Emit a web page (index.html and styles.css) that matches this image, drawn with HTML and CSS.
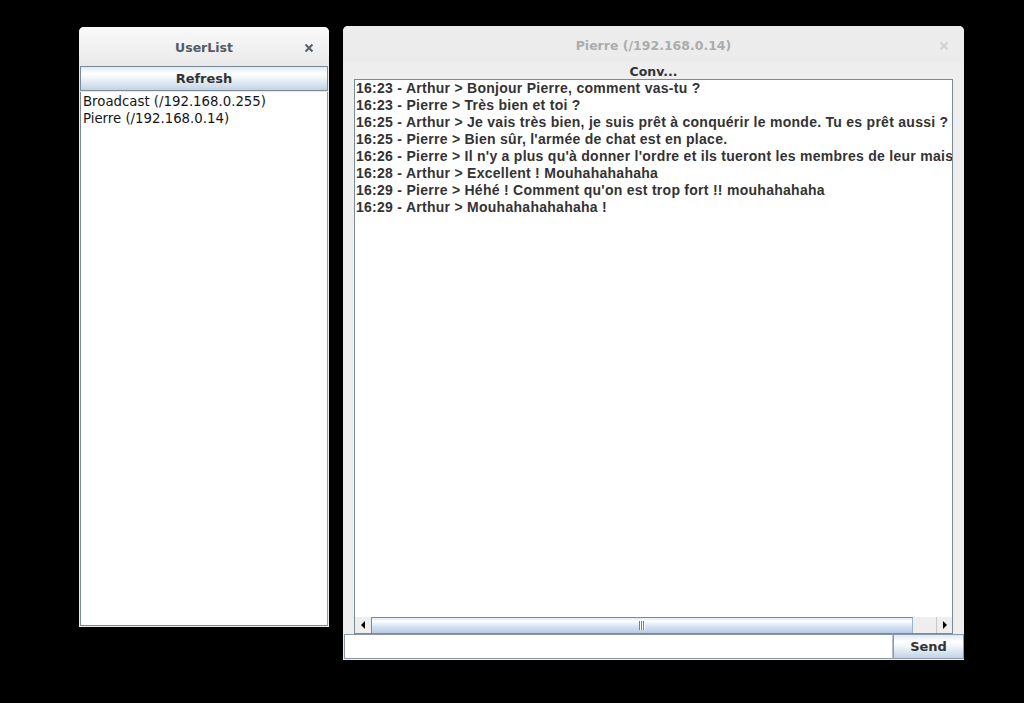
FILE: index.html
```html
<!DOCTYPE html>
<html>
<head>
<meta charset="utf-8">
<title>Chat</title>
<link rel="stylesheet" href="styles.css">
</head>
<body>
<div class="desktop">
  <div class="window win-users">
    <div class="titlebar active">
      <span class="title">UserList</span>
      <svg class="close" width="10" height="10" viewBox="0 0 10 10"><path d="M1.5 1.5 L8.5 8.5 M8.5 1.5 L1.5 8.5" stroke="currentColor" stroke-width="2" fill="none"/></svg>
    </div>
    <div class="users-body">
      <div class="btn btn-refresh">Refresh</div>
      <ul class="userlist">
        <li>Broadcast (/192.168.0.255)</li>
        <li>Pierre (/192.168.0.14)</li>
      </ul>
    </div>
  </div>

  <div class="window win-conv">
    <div class="titlebar inactive">
      <span class="title">Pierre (/192.168.0.14)</span>
      <svg class="close" width="10" height="10" viewBox="0 0 10 10"><path d="M1.5 1.5 L8.5 8.5 M8.5 1.5 L1.5 8.5" stroke="currentColor" stroke-width="2" fill="none"/></svg>
    </div>
    <div class="conv-label">Conv...</div>
    <div class="scrollpane">
      <div class="messages">
        <div class="msg">16:23 - Arthur &gt; Bonjour Pierre, comment vas-tu ?</div>
        <div class="msg">16:23 - Pierre &gt; Très bien et toi ?</div>
        <div class="msg">16:25 - Arthur &gt; Je vais très bien, je suis prêt à conquérir le monde. Tu es prêt aussi ?</div>
        <div class="msg">16:25 - Pierre &gt; Bien sûr, l'armée de chat est en place.</div>
        <div class="msg">16:26 - Pierre &gt; Il n'y a plus qu'à donner l'ordre et ils tueront les membres de leur maison</div>
        <div class="msg">16:28 - Arthur &gt; Excellent ! Mouhahahahaha</div>
        <div class="msg">16:29 - Pierre &gt; Héhé ! Comment qu'on est trop fort !! mouhahahaha</div>
        <div class="msg">16:29 - Arthur &gt; Mouhahahahahaha !</div>
      </div>
      <div class="hscroll">
        <div class="arrow-btn left"><span class="tri-left"></span></div>
        <div class="track">
          <div class="thumb"><span class="grip"></span></div>
        </div>
        <div class="arrow-btn right"><span class="tri-right"></span></div>
      </div>
    </div>
    <div class="bottom-row">
      <div class="input"></div>
      <div class="btn btn-send">Send</div>
    </div>
  </div>
</div>
</body>
</html>
```

FILE: styles.css
```css
html, body {
  margin: 0;
  padding: 0;
  background: #000;
}
.desktop {
  position: relative;
  width: 1024px;
  height: 703px;
  background: #000;
  overflow: hidden;
}
.window {
  position: absolute;
  display: flex;
  flex-direction: column;
  box-sizing: border-box;
  border-radius: 5px 5px 0 0;
  overflow: hidden;
}
.win-users {
  left: 79px;
  top: 27px;
  width: 250px;
  height: 600px;
  background: #e9e9e9;
}
.win-conv {
  left: 343px;
  top: 26px;
  width: 621px;
  height: 634px;
  background: #eeeeee;
}
.titlebar {
  position: relative;
  display: flex;
  align-items: center;
  justify-content: center;
  flex: none;
  box-sizing: border-box;
  padding-top: 2px;
  font-family: "DejaVu Sans", sans-serif;
  font-weight: 700;
  font-size: 12.5px;
}
.titlebar.active {
  height: 39px;
  background: linear-gradient(#fafafa, #e9e9e9);
  color: #535b64;
}
.titlebar.inactive {
  height: 37px;
  background: #ececec;
  color: #acacac;
}
.titlebar .close {
  position: absolute;
  top: 50%;
  margin-top: -4px;
}
.win-users .close {
  right: 15px;
  color: #58606a;
}
.win-conv .close {
  right: 15px;
  color: #d2d2d2;
}
.users-body {
  flex: 1;
  display: flex;
  flex-direction: column;
  padding: 0 1px 1px 1px;
}
.btn {
  box-sizing: border-box;
  display: flex;
  align-items: center;
  justify-content: center;
  border: 1px solid #7a8a99;
  background: linear-gradient(#dfe9f3 0%, #ffffff 28%, #f4f8fb 45%, #c2d3e5 100%);
  font-family: "DejaVu Sans", sans-serif;
  font-weight: 700;
  font-size: 13px;
  color: #333;
}
.btn-refresh {
  height: 25px;
  flex: none;
}
.userlist {
  flex: 1;
  margin: 1px 0 0 0;
  padding: 1px 0 0 2px;
  list-style: none;
  background: #fff;
  border: 1px solid #7a8a99;
  border-top: none;
  border-right-color: #8e9aa6;
  font-family: "DejaVu Sans", sans-serif;
  font-size: 13.3px;
  color: #151515;
}
.userlist li {
  height: 17px;
  line-height: 17px;
}
.conv-label {
  flex: none;
  height: 16px;
  line-height: 17px;
  text-align: center;
  font-family: "DejaVu Sans", sans-serif;
  font-weight: 700;
  font-size: 12.5px;
  color: #333;
}
.scrollpane {
  flex: 1;
  margin: 0 11px 0 11px;
  display: flex;
  flex-direction: column;
  background: #fff;
  border: 1px solid #7a8a99;
  border-bottom: none;
  min-height: 0;
}
.messages {
  flex: 1;
  overflow: hidden;
  padding: 0 0 0 1px;
  font-family: "Liberation Sans", Arial, sans-serif;
  font-weight: 700;
  font-size: 14px;
  letter-spacing: 0.27px;
  color: #333;
}
.msg {
  height: 17px;
  line-height: 17px;
  white-space: nowrap;
}
.hscroll {
  flex: none;
  height: 16px;
  display: flex;
  background: #eeeeee;
  border-bottom: 1px solid #7a8a99;
}
.arrow-btn {
  flex: none;
  width: 15px;
  display: flex;
  align-items: center;
  justify-content: center;
  background: #eeeeee;
}
.arrow-btn.left {
  width: 16px;
}
.arrow-btn.right {
  border-left: 1px solid #c8c8c8;
}
.tri-left {
  width: 0;
  height: 0;
  border-top: 4px solid transparent;
  border-bottom: 4px solid transparent;
  border-right: 4px solid #000;
}
.tri-right {
  width: 0;
  height: 0;
  border-top: 4px solid transparent;
  border-bottom: 4px solid transparent;
  border-left: 4px solid #000;
}
.track {
  flex: 1;
  display: flex;
  background: #eeeeee;
}
.thumb {
  width: 542px;
  box-sizing: border-box;
  display: flex;
  align-items: center;
  justify-content: center;
  border-top: 1px solid #6d8ac0;
  border-left: 1px solid #6d8ac0;
  border-right: 1px solid #9fb2d3;
  background: linear-gradient(#e2eaf5 0%, #ffffff 22%, #e6eef8 40%, #cbdaee 70%, #b9cce6 100%);
}
.grip {
  display: block;
  width: 6px;
  height: 9px;
  background: repeating-linear-gradient(90deg, #6580b5 0, #6580b5 1px, #ffffff 1px, #ffffff 2px);
}
.bottom-row {
  flex: none;
  display: flex;
  height: 26px;
  padding: 0 0 1px 1px;
  box-sizing: border-box;
}
.input {
  flex: 1;
  background: #fff;
  border: 1px solid #8a97a3;
  border-right-color: #b5bec6;
}
.btn-send {
  width: 71px;
  flex: none;
  border-color: #8a9bad;
}
```
